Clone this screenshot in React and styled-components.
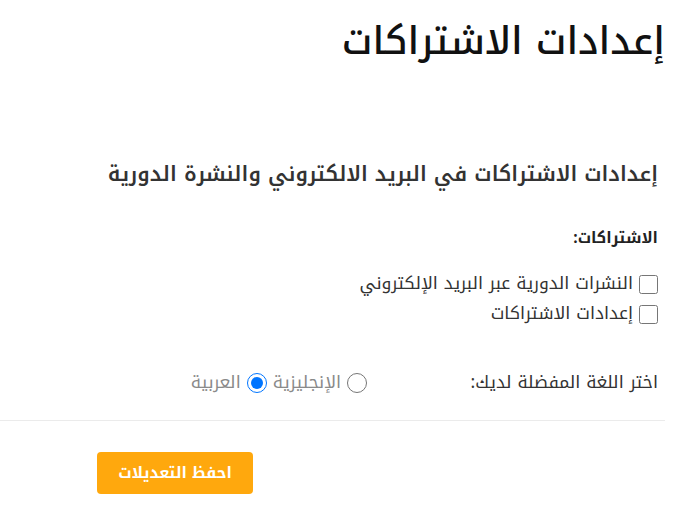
import React from "react";
import styled, { createGlobalStyle } from "styled-components";

const Global = createGlobalStyle`
  body {
    margin: 0;
    background: #fff;
    font-family: "Noto Kufi Arabic", "Noto Sans Arabic", "DejaVu Sans", sans-serif;
  }
`;

const Page = styled.div`
  direction: rtl;
  width: 665px;
  padding-top: 13px;
`;

const Title = styled.h1`
  margin: 0;
  font-size: 38px;
  line-height: 56px;
  font-weight: 500;
  color: #111;
`;

const Section = styled.div`
  padding: 89px 7px 0 0;
`;

const SubTitle = styled.h2`
  margin: 0;
  font-size: 20.7px;
  line-height: 32px;
  font-weight: 600;
  color: #333;
`;

const GroupLabel = styled.div`
  margin-top: 36px;
  font-size: 15.5px;
  line-height: 24px;
  font-weight: 700;
  color: #222;
`;

const Checks = styled.div`
  margin-top: 23px;
  display: flex;
  flex-direction: column;
  gap: 8px;
`;

const CheckRow = styled.label`
  display: flex;
  align-items: center;
  gap: 6px;
  font-size: 17.5px;
  line-height: 22px;
  color: #333;
`;

const Box = styled.input`
  width: 19px;
  height: 19px;
  margin: 0;
`;

const LangRow = styled.div`
  margin-top: 46px;
  display: grid;
  grid-template-columns: 291px auto;
  align-items: center;
  font-size: 17.5px;
  line-height: 24px;
  color: #333;
`;

const Radios = styled.div`
  display: flex;
  align-items: center;
  gap: 6px;
  color: #8a8a8a;
`;

const Radio = styled.input`
  width: 20px;
  height: 20px;
  margin: 0;
`;

const Divider = styled.hr`
  margin: 25px 0 0;
  border: 0;
  border-top: 1px solid #ebebeb;
`;

const Footer = styled.div`
  padding: 31px 0 0 97px;
  display: flex;
  justify-content: flex-end;
`;

const SaveButton = styled.button`
  width: 156px;
  height: 42px;
  border: 0;
  border-radius: 4px;
  background: #ffa80d;
  color: #fff;
  font-family: inherit;
  font-size: 15.5px;
  font-weight: 700;
`;

export default function App() {
  return (
    <Page>
      <Global />
      <Title>إعدادات الاشتراكات</Title>
      <Section>
        <SubTitle>إعدادات الاشتراكات في البريد الالكتروني والنشرة الدورية</SubTitle>
        <GroupLabel>الاشتراكات:</GroupLabel>
        <Checks>
          <CheckRow>
            <Box type="checkbox" />
            النشرات الدورية عبر البريد الإلكتروني
          </CheckRow>
          <CheckRow>
            <Box type="checkbox" />
            إعدادات الاشتراكات
          </CheckRow>
        </Checks>
        <LangRow>
          <span>اختر اللغة المفضلة لديك:</span>
          <Radios>
            <Radio type="radio" name="lang" />
            الإنجليزية
            <Radio type="radio" name="lang" defaultChecked />
            العربية
          </Radios>
        </LangRow>
      </Section>
      <Divider />
      <Footer>
        <SaveButton>احفظ التعديلات</SaveButton>
      </Footer>
    </Page>
  );
}
